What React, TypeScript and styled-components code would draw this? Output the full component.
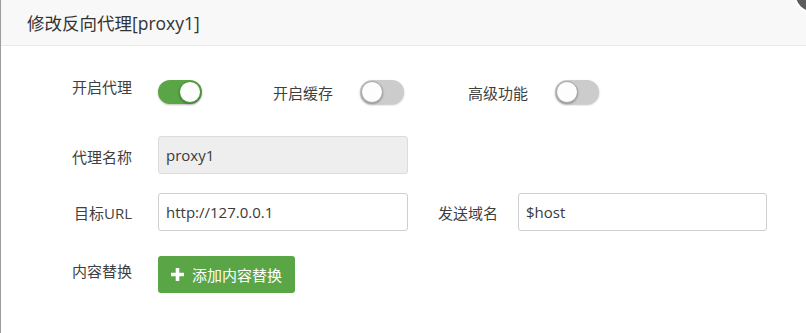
import React from "react";
import styled, { createGlobalStyle } from "styled-components";

const Global = createGlobalStyle`
  html, body { margin: 0; padding: 0; background: #fff; }
  body { font-family: "Open Sans", "Noto Sans CJK SC", sans-serif; color: #444; overflow: hidden; }
`;

const Layer = styled.div`
  position: relative;
  width: 806px;
  height: 333px;
  box-sizing: border-box;
  border-left: 1px solid #9c9c9c;
  background: #fff;
  overflow: hidden;
`;

const Header = styled.div`
  height: 46px;
  box-sizing: border-box;
  background: #f8f8f8;
  border-bottom: 1px solid #eaeaea;
  padding-left: 26px;
  display: flex;
  align-items: center;
  font-size: 17.5px;
  color: #333;
`;

const CloseDot = styled.div`
  position: absolute;
  left: 795px;
  top: -21px;
  width: 32px;
  height: 32px;
  border-radius: 50%;
  background: #5c5c5c;
  box-shadow: 0 0 0 2px #fff;
`;

const Body = styled.div`
  padding-top: 27px;
  display: flex;
  flex-direction: column;
`;

const Row = styled.div<{ $mt?: number; $h?: number }>`
  display: flex;
  align-items: flex-start;
  margin-top: ${(p) => p.$mt ?? 0}px;
  height: ${(p) => p.$h ?? 38}px;
`;

const Label = styled.div<{ $w: number; $mt: number; $mr?: number }>`
  width: ${(p) => p.$w}px;
  margin-top: ${(p) => p.$mt}px;
  margin-right: ${(p) => p.$mr ?? 26}px;
  text-align: right;
  font-size: 15px;
  line-height: 20px;
  color: #3f3f3f;
  white-space: nowrap;
`;

const Track = styled.div<{ $on?: boolean }>`
  position: relative;
  margin-top: 7px;
  width: 44px;
  height: 24px;
  border-radius: 12px;
  background: ${(p) => (p.$on ? "#5aa546" : "#cccccc")};
  box-shadow: 0 1px 2px rgba(0, 0, 0, 0.25);
  flex-shrink: 0;
`;

const Knob = styled.div<{ $on?: boolean }>`
  position: absolute;
  top: 1px;
  left: ${(p) => (p.$on ? "21px" : "1px")};
  width: 20px;
  height: 20px;
  border-radius: 50%;
  background: #fdfdfd;
  border: 1px solid ${(p) => (p.$on ? "#4a9238" : "#a8a8a8")};
  box-shadow: 0 1px 2px rgba(0, 0, 0, 0.3);
`;

const Input = styled.div<{ $w: number; $disabled?: boolean }>`
  width: ${(p) => p.$w}px;
  height: 38px;
  box-sizing: border-box;
  border: 1px solid ${(p) => (p.$disabled ? "#dcdcdc" : "#cfcfcf")};
  border-radius: 3px;
  background: ${(p) => (p.$disabled ? "#eeeeee" : "#fff")};
  padding-left: 7px;
  display: flex;
  align-items: center;
  font-size: 15px;
  color: #3a3a3a;
  white-space: nowrap;
`;

const Button = styled.div`
  height: 37px;
  box-sizing: border-box;
  padding: 0 13px 0 13px;
  background: #5aa546;
  border-radius: 3px;
  display: flex;
  align-items: center;
  gap: 8px;
  color: #fff;
  font-size: 15px;
  white-space: nowrap;
`;

const Toggle = ({ on }: { on?: boolean }) => (
  <Track $on={on}>
    <Knob $on={on} />
  </Track>
);

const Plus = () => (
  <svg width="13" height="13" viewBox="0 0 13 13">
    <path d="M4.7 0h3.6v4.7H13v3.6H8.3V13H4.7V8.3H0V4.7h4.7z" fill="#fff" />
  </svg>
);

export default function App() {
  return (
    <>
      <Global />
      <Layer>
        <CloseDot />
        <Header>修改反向代理[proxy1]</Header>
        <Body>
          <Row>
            <Label $w={131} $mt={4}>开启代理</Label>
            <Toggle on />
            <Label $w={131} $mt={10} $mr={27}>开启缓存</Label>
            <Toggle />
            <Label $w={124} $mt={10} $mr={27}>高级功能</Label>
            <Toggle />
          </Row>
          <Row $mt={25}>
            <Label $w={131} $mt={11}>代理名称</Label>
            <Input $w={250} $disabled>proxy1</Input>
          </Row>
          <Row $mt={19}>
            <Label $w={131} $mt={10}>目标URL</Label>
            <Input $w={250}>http://127.0.0.1</Input>
            <Label $w={90} $mt={10} $mr={20}>发送域名</Label>
            <Input $w={249}>$host</Input>
          </Row>
          <Row $mt={25}>
            <Label $w={131} $mt={5}>内容替换</Label>
            <Button>
              <Plus />
              添加内容替换
            </Button>
          </Row>
        </Body>
      </Layer>
    </>
  );
}
